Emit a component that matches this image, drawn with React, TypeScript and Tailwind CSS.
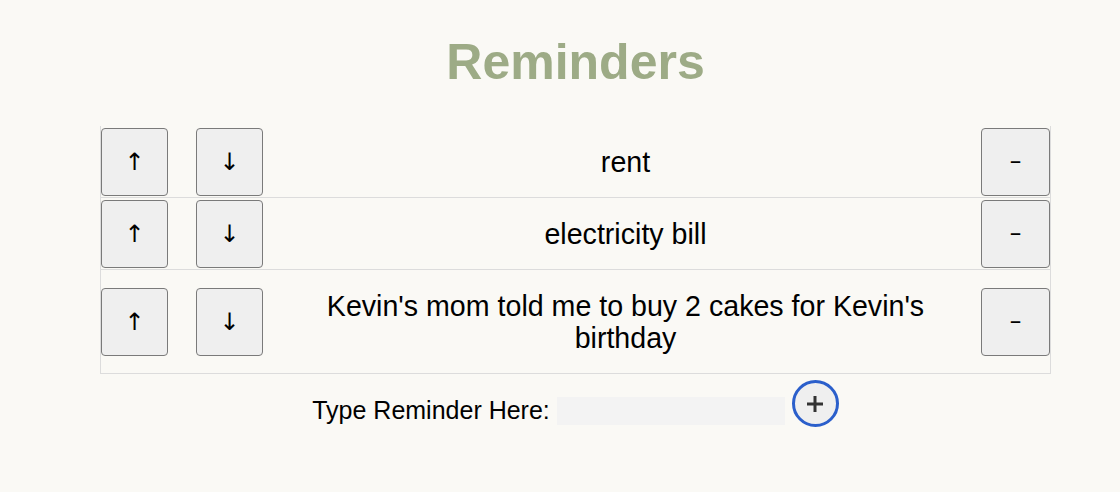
import React, { useState } from 'react';

type Item = { id: number; text: string };

const SquareButton = ({ label, onClick, className = '' }: { label: string; onClick?: () => void; className?: string }) => (
  <button
    onClick={onClick}
    className={`shrink-0 w-[67px] h-[68px] flex items-center justify-center rounded-[4px] border border-[#7a7a7a] bg-[#efefef] text-black ${className}`}
  >
    {label}
  </button>
);

export default function App() {
  const [items, setItems] = useState<Item[]>([
    { id: 1, text: 'rent' },
    { id: 2, text: 'electricity bill' },
    { id: 3, text: "Kevin's mom told me to buy 2 cakes for Kevin's birthday" },
  ]);
  const [draft, setDraft] = useState('');

  const move = (i: number, dir: number) => {
    const j = i + dir;
    if (j < 0 || j >= items.length) return;
    const next = [...items];
    [next[i], next[j]] = [next[j], next[i]];
    setItems(next);
  };

  const add = () => {
    if (!draft.trim()) return;
    setItems([...items, { id: Date.now(), text: draft.trim() }]);
    setDraft('');
  };

  return (
    <div className="min-h-screen bg-[#faf9f5] font-['Liberation_Sans',Arial,sans-serif] text-black">
      <div className="ml-[100px] w-[951px] pt-[34px] flex flex-col items-center">
        {/* Title */}
        <h1 className="text-[50px] leading-[57px] font-bold text-[#9dab86]">Reminders</h1>

        {/* List */}
        <div className="mt-[35px] w-full border-x border-b border-[#dcdcdc]">
          {items.map((item, i) => (
            <div key={item.id} className="flex items-center border-b border-[#dcdcdc] last:border-b-0">
              <SquareButton
                label="↑"
                onClick={() => move(i, -1)}
                className="font-['DejaVu_Sans',sans-serif] text-[24px]"
              />
              <SquareButton
                label="↓"
                onClick={() => move(i, 1)}
                className="ml-[28px] font-['DejaVu_Sans',sans-serif] text-[24px]"
              />
              <p className="flex-1 pl-[40px] pr-[33px] py-[19.5px] text-center text-[28.6px] leading-[32px]">
                {item.text}
              </p>
              <SquareButton
                label="–"
                onClick={() => setItems(items.filter((x) => x.id !== item.id))}
                className="w-[69px] text-[19px] font-bold"
              />
            </div>
          ))}
        </div>

        {/* Add form */}
        <div className="mt-[6px] flex items-end">
          <label className="mb-[2px] text-[25px] leading-[30px]">Type Reminder Here:</label>
          <input
            value={draft}
            onChange={(e) => setDraft(e.target.value)}
            className="ml-[7px] mb-[2px] w-[228px] h-[28px] bg-[#f3f3f3] outline-none px-2 text-[18px]"
          />
          <button
            onClick={add}
            className="ml-[7px] w-[47px] h-[47px] rounded-full border-[3px] border-[#2b5fcb] bg-[#efefef] flex items-center justify-center"
          >
            <svg width="18" height="18" viewBox="0 0 18 18">
              <path d="M9 1v16M1 9h16" stroke="#333" strokeWidth="3" />
            </svg>
          </button>
        </div>
      </div>
    </div>
  );
}
